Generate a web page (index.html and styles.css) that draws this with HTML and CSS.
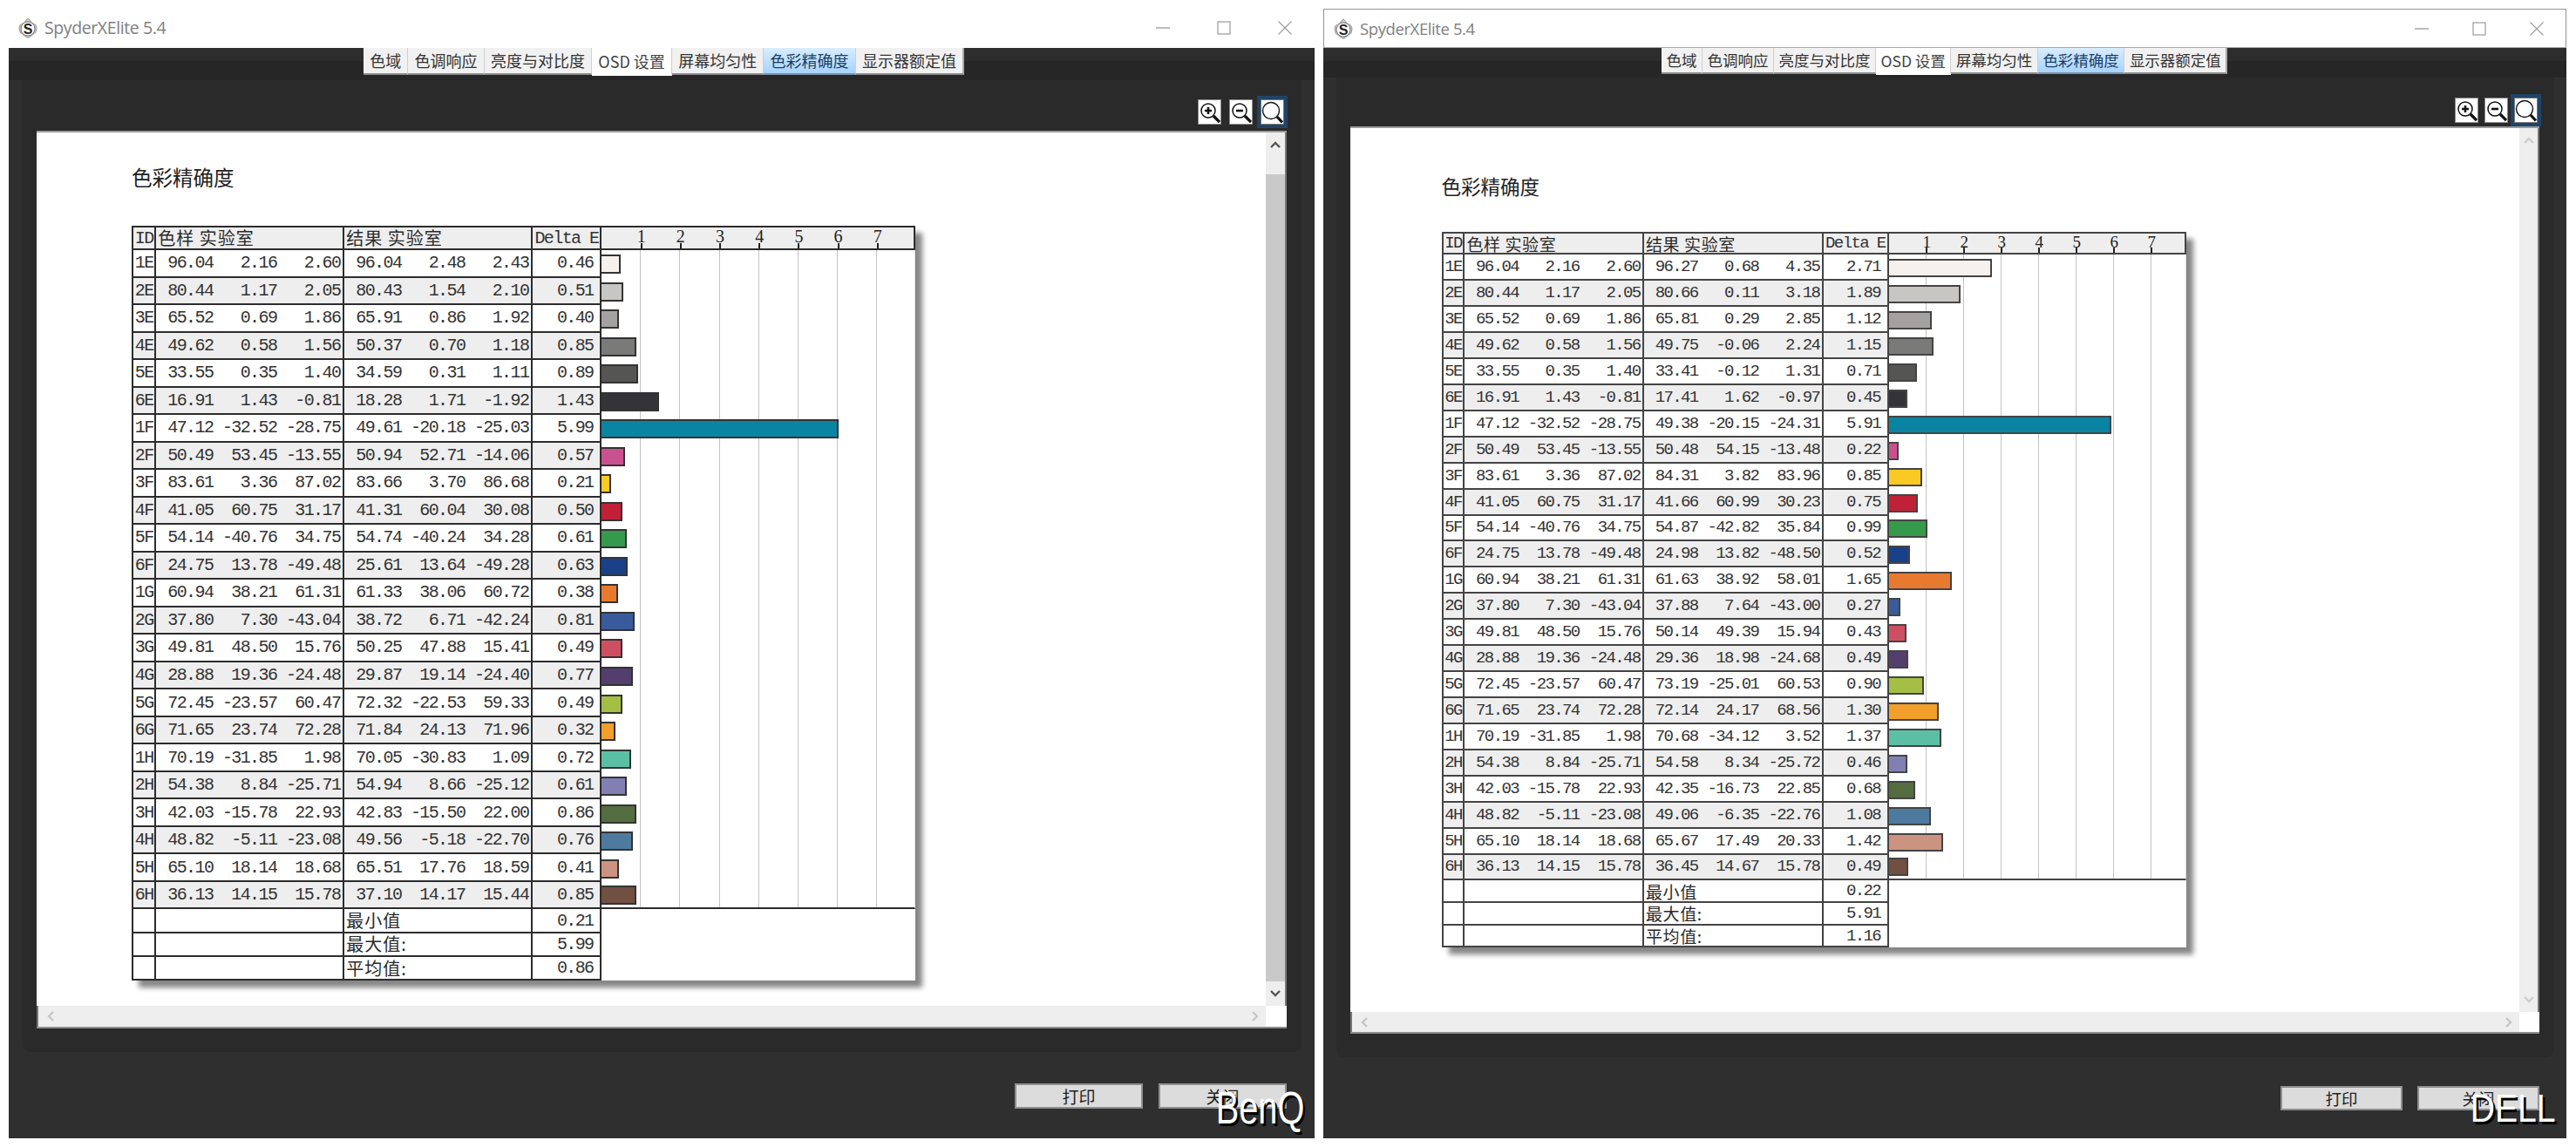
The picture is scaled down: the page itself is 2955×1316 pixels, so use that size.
FILE: index.html
```html
<!DOCTYPE html>
<html lang="zh-CN">
<head>
<meta charset="utf-8">
<title>SpyderXElite 5.4</title>
<link rel="stylesheet" href="styles.css">
</head>
<body>
<svg class="sprite" aria-hidden="true">
  <symbol id="logo" viewBox="0 0 22 24"><path d="M11 1 L14 4 L14.5 5.5 L20 8.5 L21 12 L20 17 L15 21 L11 23.500 L7 21 L2 17 L1 12 L2 8.500 L7.500 5.500 L8 4 Z" fill="#c9c9c9" stroke="#9a9a9a"/><circle cx="11" cy="13" r="8" fill="#fff" stroke="#777" stroke-width="1"/><text x="11" y="18.500" text-anchor="middle" class="logo-s">S</text></symbol>
  <symbol id="min" viewBox="0 0 16 16"><path d="M0 8H16" stroke="#9a9a9a" stroke-width="1.300" fill="none"/></symbol>
  <symbol id="max" viewBox="0 0 16 16"><rect x="1" y="1" width="14" height="14" stroke="#9a9a9a" stroke-width="1.200" fill="none"/></symbol>
  <symbol id="close" viewBox="0 0 16 16"><path d="M0.500 0.500L15.500 15.500M15.500 0.500L0.500 15.500" stroke="#9a9a9a" stroke-width="1.100" fill="none"/></symbol>
  <symbol id="zin" viewBox="0 0 25 27"><circle cx="11" cy="12" r="8" fill="none" stroke="#111" stroke-width="1.500"/><path d="M7 12H15M11 8V16" stroke="#111" stroke-width="2.600"/><path d="M17 18L24 25" stroke="#111" stroke-width="3.200"/></symbol>
  <symbol id="zout" viewBox="0 0 25 27"><circle cx="11" cy="12" r="8" fill="none" stroke="#111" stroke-width="1.500"/><path d="M7 12H15" stroke="#111" stroke-width="2.600"/><path d="M17 18L24 25" stroke="#111" stroke-width="3.200"/></symbol>
  <symbol id="zfit" viewBox="0 0 25 27"><circle cx="11" cy="12" r="9.500" fill="none" stroke="#111" stroke-width="1.400"/><path d="M18 19L24 25.500" stroke="#111" stroke-width="3.200"/></symbol>
  <symbol id="up" viewBox="0 0 12 8"><path d="M1 7L6 2L11 7" fill="none" stroke="currentColor" stroke-width="2.400"/></symbol>
  <symbol id="down" viewBox="0 0 12 8"><path d="M1 1L6 6L11 1" fill="none" stroke="currentColor" stroke-width="2.400"/></symbol>
  <symbol id="left" viewBox="0 0 8 12"><path d="M7 1L2 6L7 11" fill="none" stroke="currentColor" stroke-width="2.400"/></symbol>
  <symbol id="right" viewBox="0 0 8 12"><path d="M1 1L6 6L1 11" fill="none" stroke="currentColor" stroke-width="2.400"/></symbol>
</svg>
<div class="screen">

<section class="win win-a">
  <header class="titlebar">
    <svg class="logo"><use href="#logo"/></svg>
    <span class="apptitle">SpyderXElite 5.4</span>
    <div class="controls">
      <svg class="ctl"><use href="#min"/></svg>
      <svg class="ctl"><use href="#max"/></svg>
      <svg class="ctl"><use href="#close"/></svg>
    </div>
  </header>
  <div class="winbody">
    <nav class="tabstrip">
      <span class="tab">色域</span><span class="tab">色调响应</span><span class="tab">亮度与对比度</span><span class="tab tab-open">OSD 设置</span><span class="tab">屏幕均匀性</span><span class="tab tab-on">色彩精确度</span><span class="tab tab-end">显示器额定值</span>
    </nav>
    <div class="panel">
      <div class="zoombar">
        <span class="zbtn"><svg><use href="#zin"/></svg></span>
        <span class="zbtn"><svg><use href="#zout"/></svg></span>
        <span class="zbtn zbtn-on"><svg><use href="#zfit"/></svg></span>
      </div>
      <div class="viewport">
        <div class="page">
          <h1 class="report">色彩精确度</h1>
          <div class="table">
            <div class="row head"><span class="c id">ID</span><span class="c lab">色样 实验室</span><span class="c lab">结果 实验室</span><span class="c dh">Delta E</span><span class="axis"><span>1</span><span>2</span><span>3</span><span>4</span><span>5</span><span>6</span><span>7</span></span></div>
            <div class="row"><span class="c id">1E</span><span class="c v"><b>96.04</b><b>2.16</b><b>2.60</b></span><span class="c v"><b>96.04</b><b>2.48</b><b>2.43</b></span><span class="c de">0.46</span><span class="plot"><i class="bar p01" style="--d:.46"></i></span></div>
            <div class="row"><span class="c id">2E</span><span class="c v"><b>80.44</b><b>1.17</b><b>2.05</b></span><span class="c v"><b>80.43</b><b>1.54</b><b>2.10</b></span><span class="c de">0.51</span><span class="plot"><i class="bar p02" style="--d:.51"></i></span></div>
            <div class="row"><span class="c id">3E</span><span class="c v"><b>65.52</b><b>0.69</b><b>1.86</b></span><span class="c v"><b>65.91</b><b>0.86</b><b>1.92</b></span><span class="c de">0.40</span><span class="plot"><i class="bar p03" style="--d:.40"></i></span></div>
            <div class="row"><span class="c id">4E</span><span class="c v"><b>49.62</b><b>0.58</b><b>1.56</b></span><span class="c v"><b>50.37</b><b>0.70</b><b>1.18</b></span><span class="c de">0.85</span><span class="plot"><i class="bar p04" style="--d:.85"></i></span></div>
            <div class="row"><span class="c id">5E</span><span class="c v"><b>33.55</b><b>0.35</b><b>1.40</b></span><span class="c v"><b>34.59</b><b>0.31</b><b>1.11</b></span><span class="c de">0.89</span><span class="plot"><i class="bar p05" style="--d:.89"></i></span></div>
            <div class="row"><span class="c id">6E</span><span class="c v"><b>16.91</b><b>1.43</b><b>-0.81</b></span><span class="c v"><b>18.28</b><b>1.71</b><b>-1.92</b></span><span class="c de">1.43</span><span class="plot"><i class="bar p06" style="--d:1.43"></i></span></div>
            <div class="row"><span class="c id">1F</span><span class="c v"><b>47.12</b><b>-32.52</b><b>-28.75</b></span><span class="c v"><b>49.61</b><b>-20.18</b><b>-25.03</b></span><span class="c de">5.99</span><span class="plot"><i class="bar p07" style="--d:5.99"></i></span></div>
            <div class="row"><span class="c id">2F</span><span class="c v"><b>50.49</b><b>53.45</b><b>-13.55</b></span><span class="c v"><b>50.94</b><b>52.71</b><b>-14.06</b></span><span class="c de">0.57</span><span class="plot"><i class="bar p08" style="--d:.57"></i></span></div>
            <div class="row"><span class="c id">3F</span><span class="c v"><b>83.61</b><b>3.36</b><b>87.02</b></span><span class="c v"><b>83.66</b><b>3.70</b><b>86.68</b></span><span class="c de">0.21</span><span class="plot"><i class="bar p09" style="--d:.21"></i></span></div>
            <div class="row"><span class="c id">4F</span><span class="c v"><b>41.05</b><b>60.75</b><b>31.17</b></span><span class="c v"><b>41.31</b><b>60.04</b><b>30.08</b></span><span class="c de">0.50</span><span class="plot"><i class="bar p10" style="--d:.50"></i></span></div>
            <div class="row"><span class="c id">5F</span><span class="c v"><b>54.14</b><b>-40.76</b><b>34.75</b></span><span class="c v"><b>54.74</b><b>-40.24</b><b>34.28</b></span><span class="c de">0.61</span><span class="plot"><i class="bar p11" style="--d:.61"></i></span></div>
            <div class="row"><span class="c id">6F</span><span class="c v"><b>24.75</b><b>13.78</b><b>-49.48</b></span><span class="c v"><b>25.61</b><b>13.64</b><b>-49.28</b></span><span class="c de">0.63</span><span class="plot"><i class="bar p12" style="--d:.63"></i></span></div>
            <div class="row"><span class="c id">1G</span><span class="c v"><b>60.94</b><b>38.21</b><b>61.31</b></span><span class="c v"><b>61.33</b><b>38.06</b><b>60.72</b></span><span class="c de">0.38</span><span class="plot"><i class="bar p13" style="--d:.38"></i></span></div>
            <div class="row"><span class="c id">2G</span><span class="c v"><b>37.80</b><b>7.30</b><b>-43.04</b></span><span class="c v"><b>38.72</b><b>6.71</b><b>-42.24</b></span><span class="c de">0.81</span><span class="plot"><i class="bar p14" style="--d:.81"></i></span></div>
            <div class="row"><span class="c id">3G</span><span class="c v"><b>49.81</b><b>48.50</b><b>15.76</b></span><span class="c v"><b>50.25</b><b>47.88</b><b>15.41</b></span><span class="c de">0.49</span><span class="plot"><i class="bar p15" style="--d:.49"></i></span></div>
            <div class="row"><span class="c id">4G</span><span class="c v"><b>28.88</b><b>19.36</b><b>-24.48</b></span><span class="c v"><b>29.87</b><b>19.14</b><b>-24.40</b></span><span class="c de">0.77</span><span class="plot"><i class="bar p16" style="--d:.77"></i></span></div>
            <div class="row"><span class="c id">5G</span><span class="c v"><b>72.45</b><b>-23.57</b><b>60.47</b></span><span class="c v"><b>72.32</b><b>-22.53</b><b>59.33</b></span><span class="c de">0.49</span><span class="plot"><i class="bar p17" style="--d:.49"></i></span></div>
            <div class="row"><span class="c id">6G</span><span class="c v"><b>71.65</b><b>23.74</b><b>72.28</b></span><span class="c v"><b>71.84</b><b>24.13</b><b>71.96</b></span><span class="c de">0.32</span><span class="plot"><i class="bar p18" style="--d:.32"></i></span></div>
            <div class="row"><span class="c id">1H</span><span class="c v"><b>70.19</b><b>-31.85</b><b>1.98</b></span><span class="c v"><b>70.05</b><b>-30.83</b><b>1.09</b></span><span class="c de">0.72</span><span class="plot"><i class="bar p19" style="--d:.72"></i></span></div>
            <div class="row"><span class="c id">2H</span><span class="c v"><b>54.38</b><b>8.84</b><b>-25.71</b></span><span class="c v"><b>54.94</b><b>8.66</b><b>-25.12</b></span><span class="c de">0.61</span><span class="plot"><i class="bar p20" style="--d:.61"></i></span></div>
            <div class="row"><span class="c id">3H</span><span class="c v"><b>42.03</b><b>-15.78</b><b>22.93</b></span><span class="c v"><b>42.83</b><b>-15.50</b><b>22.00</b></span><span class="c de">0.86</span><span class="plot"><i class="bar p21" style="--d:.86"></i></span></div>
            <div class="row"><span class="c id">4H</span><span class="c v"><b>48.82</b><b>-5.11</b><b>-23.08</b></span><span class="c v"><b>49.56</b><b>-5.18</b><b>-22.70</b></span><span class="c de">0.76</span><span class="plot"><i class="bar p22" style="--d:.76"></i></span></div>
            <div class="row"><span class="c id">5H</span><span class="c v"><b>65.10</b><b>18.14</b><b>18.68</b></span><span class="c v"><b>65.51</b><b>17.76</b><b>18.59</b></span><span class="c de">0.41</span><span class="plot"><i class="bar p23" style="--d:.41"></i></span></div>
            <div class="row last"><span class="c id">6H</span><span class="c v"><b>36.13</b><b>14.15</b><b>15.78</b></span><span class="c v"><b>37.10</b><b>14.17</b><b>15.44</b></span><span class="c de">0.85</span><span class="plot"><i class="bar p24" style="--d:.85"></i></span></div>
            <div class="row sum"><span class="c id"></span><span class="c lab"></span><span class="c lab">最小值</span><span class="c de">0.21</span></div>
            <div class="row sum"><span class="c id"></span><span class="c lab"></span><span class="c lab">最大值:</span><span class="c de">5.99</span></div>
            <div class="row sum"><span class="c id"></span><span class="c lab"></span><span class="c lab">平均值:</span><span class="c de">0.86</span></div>
          </div>
        </div>
        <div class="vbar vbar-live">
          <span class="sbtn sbtn-top"><svg class="chev-v"><use href="#up"/></svg></span>
          <span class="thumb"></span>
          <span class="sbtn sbtn-bot"><svg class="chev-v"><use href="#down"/></svg></span>
        </div>
        <div class="hbar"><svg class="chev-h"><use href="#left"/></svg><svg class="chev-h"><use href="#right"/></svg></div>
        <div class="corner"></div>
      </div>
    </div>
    <footer class="foot">
      <span class="btn">打印</span><span class="btn">关闭</span>
      <span class="brand">BenQ</span>
    </footer>
  </div>
</section>

<section class="win win-b">
  <header class="titlebar">
    <svg class="logo"><use href="#logo"/></svg>
    <span class="apptitle">SpyderXElite 5.4</span>
    <div class="controls">
      <svg class="ctl"><use href="#min"/></svg>
      <svg class="ctl"><use href="#max"/></svg>
      <svg class="ctl"><use href="#close"/></svg>
    </div>
  </header>
  <div class="winbody">
    <nav class="tabstrip">
      <span class="tab">色域</span><span class="tab">色调响应</span><span class="tab">亮度与对比度</span><span class="tab tab-open">OSD 设置</span><span class="tab">屏幕均匀性</span><span class="tab tab-on">色彩精确度</span><span class="tab tab-end">显示器额定值</span>
    </nav>
    <div class="panel">
      <div class="zoombar">
        <span class="zbtn"><svg><use href="#zin"/></svg></span>
        <span class="zbtn"><svg><use href="#zout"/></svg></span>
        <span class="zbtn zbtn-on"><svg><use href="#zfit"/></svg></span>
      </div>
      <div class="viewport">
        <div class="page">
          <h1 class="report">色彩精确度</h1>
          <div class="table">
            <div class="row head"><span class="c id">ID</span><span class="c lab">色样 实验室</span><span class="c lab">结果 实验室</span><span class="c dh">Delta E</span><span class="axis"><span>1</span><span>2</span><span>3</span><span>4</span><span>5</span><span>6</span><span>7</span></span></div>
            <div class="row"><span class="c id">1E</span><span class="c v"><b>96.04</b><b>2.16</b><b>2.60</b></span><span class="c v"><b>96.27</b><b>0.68</b><b>4.35</b></span><span class="c de">2.71</span><span class="plot"><i class="bar p01" style="--d:2.71"></i></span></div>
            <div class="row"><span class="c id">2E</span><span class="c v"><b>80.44</b><b>1.17</b><b>2.05</b></span><span class="c v"><b>80.66</b><b>0.11</b><b>3.18</b></span><span class="c de">1.89</span><span class="plot"><i class="bar p02" style="--d:1.89"></i></span></div>
            <div class="row"><span class="c id">3E</span><span class="c v"><b>65.52</b><b>0.69</b><b>1.86</b></span><span class="c v"><b>65.81</b><b>0.29</b><b>2.85</b></span><span class="c de">1.12</span><span class="plot"><i class="bar p03" style="--d:1.12"></i></span></div>
            <div class="row"><span class="c id">4E</span><span class="c v"><b>49.62</b><b>0.58</b><b>1.56</b></span><span class="c v"><b>49.75</b><b>-0.06</b><b>2.24</b></span><span class="c de">1.15</span><span class="plot"><i class="bar p04" style="--d:1.15"></i></span></div>
            <div class="row"><span class="c id">5E</span><span class="c v"><b>33.55</b><b>0.35</b><b>1.40</b></span><span class="c v"><b>33.41</b><b>-0.12</b><b>1.31</b></span><span class="c de">0.71</span><span class="plot"><i class="bar p05" style="--d:.71"></i></span></div>
            <div class="row"><span class="c id">6E</span><span class="c v"><b>16.91</b><b>1.43</b><b>-0.81</b></span><span class="c v"><b>17.41</b><b>1.62</b><b>-0.97</b></span><span class="c de">0.45</span><span class="plot"><i class="bar p06" style="--d:.45"></i></span></div>
            <div class="row"><span class="c id">1F</span><span class="c v"><b>47.12</b><b>-32.52</b><b>-28.75</b></span><span class="c v"><b>49.38</b><b>-20.15</b><b>-24.31</b></span><span class="c de">5.91</span><span class="plot"><i class="bar p07" style="--d:5.91"></i></span></div>
            <div class="row"><span class="c id">2F</span><span class="c v"><b>50.49</b><b>53.45</b><b>-13.55</b></span><span class="c v"><b>50.48</b><b>54.15</b><b>-13.48</b></span><span class="c de">0.22</span><span class="plot"><i class="bar p08" style="--d:.22"></i></span></div>
            <div class="row"><span class="c id">3F</span><span class="c v"><b>83.61</b><b>3.36</b><b>87.02</b></span><span class="c v"><b>84.31</b><b>3.82</b><b>83.96</b></span><span class="c de">0.85</span><span class="plot"><i class="bar p09" style="--d:.85"></i></span></div>
            <div class="row"><span class="c id">4F</span><span class="c v"><b>41.05</b><b>60.75</b><b>31.17</b></span><span class="c v"><b>41.66</b><b>60.99</b><b>30.23</b></span><span class="c de">0.75</span><span class="plot"><i class="bar p10" style="--d:.75"></i></span></div>
            <div class="row"><span class="c id">5F</span><span class="c v"><b>54.14</b><b>-40.76</b><b>34.75</b></span><span class="c v"><b>54.87</b><b>-42.82</b><b>35.84</b></span><span class="c de">0.99</span><span class="plot"><i class="bar p11" style="--d:.99"></i></span></div>
            <div class="row"><span class="c id">6F</span><span class="c v"><b>24.75</b><b>13.78</b><b>-49.48</b></span><span class="c v"><b>24.98</b><b>13.82</b><b>-48.50</b></span><span class="c de">0.52</span><span class="plot"><i class="bar p12" style="--d:.52"></i></span></div>
            <div class="row"><span class="c id">1G</span><span class="c v"><b>60.94</b><b>38.21</b><b>61.31</b></span><span class="c v"><b>61.63</b><b>38.92</b><b>58.01</b></span><span class="c de">1.65</span><span class="plot"><i class="bar p13" style="--d:1.65"></i></span></div>
            <div class="row"><span class="c id">2G</span><span class="c v"><b>37.80</b><b>7.30</b><b>-43.04</b></span><span class="c v"><b>37.88</b><b>7.64</b><b>-43.00</b></span><span class="c de">0.27</span><span class="plot"><i class="bar p14" style="--d:.27"></i></span></div>
            <div class="row"><span class="c id">3G</span><span class="c v"><b>49.81</b><b>48.50</b><b>15.76</b></span><span class="c v"><b>50.14</b><b>49.39</b><b>15.94</b></span><span class="c de">0.43</span><span class="plot"><i class="bar p15" style="--d:.43"></i></span></div>
            <div class="row"><span class="c id">4G</span><span class="c v"><b>28.88</b><b>19.36</b><b>-24.48</b></span><span class="c v"><b>29.36</b><b>18.98</b><b>-24.68</b></span><span class="c de">0.49</span><span class="plot"><i class="bar p16" style="--d:.49"></i></span></div>
            <div class="row"><span class="c id">5G</span><span class="c v"><b>72.45</b><b>-23.57</b><b>60.47</b></span><span class="c v"><b>73.19</b><b>-25.01</b><b>60.53</b></span><span class="c de">0.90</span><span class="plot"><i class="bar p17" style="--d:.90"></i></span></div>
            <div class="row"><span class="c id">6G</span><span class="c v"><b>71.65</b><b>23.74</b><b>72.28</b></span><span class="c v"><b>72.14</b><b>24.17</b><b>68.56</b></span><span class="c de">1.30</span><span class="plot"><i class="bar p18" style="--d:1.30"></i></span></div>
            <div class="row"><span class="c id">1H</span><span class="c v"><b>70.19</b><b>-31.85</b><b>1.98</b></span><span class="c v"><b>70.68</b><b>-34.12</b><b>3.52</b></span><span class="c de">1.37</span><span class="plot"><i class="bar p19" style="--d:1.37"></i></span></div>
            <div class="row"><span class="c id">2H</span><span class="c v"><b>54.38</b><b>8.84</b><b>-25.71</b></span><span class="c v"><b>54.58</b><b>8.34</b><b>-25.72</b></span><span class="c de">0.46</span><span class="plot"><i class="bar p20" style="--d:.46"></i></span></div>
            <div class="row"><span class="c id">3H</span><span class="c v"><b>42.03</b><b>-15.78</b><b>22.93</b></span><span class="c v"><b>42.35</b><b>-16.73</b><b>22.85</b></span><span class="c de">0.68</span><span class="plot"><i class="bar p21" style="--d:.68"></i></span></div>
            <div class="row"><span class="c id">4H</span><span class="c v"><b>48.82</b><b>-5.11</b><b>-23.08</b></span><span class="c v"><b>49.06</b><b>-6.35</b><b>-22.76</b></span><span class="c de">1.08</span><span class="plot"><i class="bar p22" style="--d:1.08"></i></span></div>
            <div class="row"><span class="c id">5H</span><span class="c v"><b>65.10</b><b>18.14</b><b>18.68</b></span><span class="c v"><b>65.67</b><b>17.49</b><b>20.33</b></span><span class="c de">1.42</span><span class="plot"><i class="bar p23" style="--d:1.42"></i></span></div>
            <div class="row last"><span class="c id">6H</span><span class="c v"><b>36.13</b><b>14.15</b><b>15.78</b></span><span class="c v"><b>36.45</b><b>14.67</b><b>15.78</b></span><span class="c de">0.49</span><span class="plot"><i class="bar p24" style="--d:.49"></i></span></div>
            <div class="row sum"><span class="c id"></span><span class="c lab"></span><span class="c lab">最小值</span><span class="c de">0.22</span></div>
            <div class="row sum"><span class="c id"></span><span class="c lab"></span><span class="c lab">最大值:</span><span class="c de">5.91</span></div>
            <div class="row sum"><span class="c id"></span><span class="c lab"></span><span class="c lab">平均值:</span><span class="c de">1.16</span></div>
          </div>
        </div>
        <div class="vbar">
          <span class="sbtn sbtn-top"><svg class="chev-v"><use href="#up"/></svg></span>
          <span class="sbtn sbtn-bot"><svg class="chev-v"><use href="#down"/></svg></span>
        </div>
        <div class="hbar"><svg class="chev-h"><use href="#left"/></svg><svg class="chev-h"><use href="#right"/></svg></div>
        <div class="corner"></div>
      </div>
    </div>
    <footer class="foot">
      <span class="btn">打印</span><span class="btn">关闭</span>
      <span class="brand">DELL</span>
    </footer>
  </div>
</section>

</div>
</body>
</html>
```

FILE: styles.css
```css
* { box-sizing: border-box; }
html, body { margin: 0; padding: 0; background: #fff; }
body { width: 2955px; height: 1316px; overflow: hidden; font-family: "Noto Sans CJK SC", "Noto Sans", sans-serif; }
.sprite { display: none; }
.logo-s { font: 900 16px "Liberation Sans", sans-serif; fill: #222; }

.screen { display: flex; height: 1316px; padding: 0 11px 10px 10px; gap: 10px; }

.win { position: relative; display: flex; flex-direction: column; flex: none; }
.win-a {
  width: 1498px;
  --title-h: 55px; --title-pt: 9px; --title-pl: 11px;
  --ctl-gap: 54px; --ctl-pr: 26px; --app-fs: 19.500px;
  --strip-h: 37px; --tab-ml: 407px; --tab-fs: 18px; --tab-px: 7.200px; --tab-h: 31px;
  --panel-ml: 16px; --panel-mr: 15px; --panel-h: 1115px;
  --vp-ml: 16px; --vp-mr: 17px; --zoom-h: 58px; --zoom-pt: 23px; --zoom-gap: 11px; --zoom-pr: 4px; --vp-mb: 27px;
  --sb: 24px;
  --page-pl: 109px; --title-pt2: 38px; --report-fs: 23.500px; --report-mb: 41px;
  --c-id: 28.300px; --c-lab: 216px; --c-de: 79.200px; --c-plot: 360px;
  --h-h: 28px; --row-h: 31.520px; --sum-h: 27.300px;
  --v1: 65px; --v2: 73px; --v3: 73px;
  --fs: 20px; --ls: -1.600px; --cj: 20px; --cjls: 1px; --tick: 45.200px; --barh: 22px; --line: #2c2c2c;
  --bar-line: #333; --sb-arrow: #555; --foot-pt: 36px; --foot-pr: 32px; --foot-gap: 18px;
  --btn-w: 147px; --btn-h: 29px; --btn-fs: 19px;
  --brand-fs: 51px; --brand-r: 12px; --brand-b: 9px; --brand-sx: .78;
}
.win-b {
  margin-top: 10px;
  width: 1426px;
  --title-h: 45px; --title-pt: 0px; --title-pl: 11px;
  --ctl-gap: 50px; --ctl-pr: 25px; --app-fs: 18.500px;
  --strip-h: 34px; --tab-ml: 388px; --tab-fs: 17.500px; --tab-px: 5.500px; --tab-h: 30px;
  --panel-ml: 15px; --panel-mr: 14px; --panel-h: 1124px;
  --vp-ml: 16px; --vp-mr: 17px; --zoom-h: 55.500px; --zoom-pt: 24px; --zoom-gap: 9px; --zoom-pr: 3px; --vp-mb: 27px;
  --sb: 23px;
  --page-pl: 104.500px; --title-pt2: 53.500px; --report-fs: 22.500px; --report-mb: 38px;
  --c-id: 26.900px; --c-lab: 205.600px; --c-de: 75.600px; --c-plot: 341px;
  --h-h: 26.300px; --row-h: 29.930px; --sum-h: 25.700px;
  --v1: 61.700px; --v2: 69.600px; --v3: 70px;
  --fs: 19px; --ls: -1.600px; --cj: 19px; --cjls: .6px; --tick: 43px; --barh: 21px; --line: #444;
  --bar-line: #444; --sb-arrow: #ccc; --foot-pt: 33px; --foot-pr: 31px; --foot-gap: 17px;
  --btn-w: 140px; --btn-h: 28px; --btn-fs: 18.500px;
  --brand-fs: 45px; --brand-r: 12px; --brand-b: 12px; --brand-sx: .87;
}

/* title bar */
.titlebar {
  flex: none; display: flex; align-items: center; height: var(--title-h);
  padding: var(--title-pt) var(--ctl-pr) 0 var(--title-pl); background: #fff;
}
.win-b .titlebar { border: 1px solid #97909a; border-bottom-color: #aaa; }
.logo { width: 22px; height: 24px; flex: none; }
.apptitle { margin-left: 8px; font-family: "Open Sans", sans-serif; font-size: var(--app-fs); line-height: 22px; color: #808080; white-space: nowrap; letter-spacing: -.4px; }
.controls { margin-left: auto; display: flex; gap: var(--ctl-gap); align-items: center; }
.ctl { width: 16px; height: 16px; display: block; }

/* body */
.winbody { position: relative; flex: 1; display: flex; flex-direction: column; background: #2f2f2f; }
.tabstrip {
  flex: none; display: flex; align-items: flex-start; height: var(--strip-h); padding-left: var(--tab-ml);
  background: linear-gradient(#2e2e2e 0, #2c2c2c 15px, #262626 15px, #262626 100%);
}
.tab {
  height: var(--tab-h); line-height: calc(var(--tab-h) - 3px); padding: 0 var(--tab-px);
  font-size: var(--tab-fs); color: #333; white-space: nowrap;
  background: #f1f1f1; border-right: 1px solid #cfcfcf; border-bottom: 2px solid #8a8a8a;
}
.tab-open { background: #fff; border-bottom: 2px solid #fff; height: calc(var(--tab-h) + 1px); line-height: var(--tab-h); color: #444; }
.tab-on { background: linear-gradient(#d9ecfd, #a6d3ff); color: #1a3f66; border-bottom-color: #7d8fa5; }
.tab-end { border-right: 2px solid #aaa; }

/* panel */
.panel {
  flex: none; height: var(--panel-h); margin: 0 var(--panel-mr) 0 var(--panel-ml);
  padding: 0 var(--vp-mr) var(--vp-mb) var(--vp-ml);
  display: flex; flex-direction: column; background: #2a2a2a; border-radius: 0 0 9px 9px;
}
.zoombar {
  flex: none; height: var(--zoom-h); padding: var(--zoom-pt) var(--zoom-pr) 0 0;
  display: flex; justify-content: flex-end; align-items: flex-start; gap: var(--zoom-gap);
}
.zbtn { width: 25px; height: 27px; background: #fff; box-shadow: 0 0 0 1px #8a8a8a; display: block; }
.zbtn svg { width: 25px; height: 27px; display: block; }
.zbtn-on { box-shadow: 0 0 0 1px #777, 0 0 0 5px #1f4466; }

.viewport {
  flex: 1; min-height: 0; display: grid; background: #fff;
  grid-template-columns: minmax(0, 1fr) var(--sb); grid-template-rows: minmax(0, 1fr) var(--sb);
  border-top: 2px solid #9c9c9c; border-bottom: 2px solid #8c8c8c;
}
.page { padding: calc(var(--title-pt2) - 2px) 0 0 var(--page-pl); overflow: hidden; }
.report { margin: 0 0 var(--report-mb); font-size: var(--report-fs); line-height: 30px; height: 30px; font-weight: 400; color: #222; }

/* table */
.table { width: max-content; box-shadow: 8px 8px 6px rgba(0, 0, 0, .48); background: #fff; font-family: "Liberation Mono", "Noto Sans CJK SC", monospace; }
.row {
  display: grid; height: var(--row-h); color: #333; font-size: var(--fs); letter-spacing: var(--ls);
  grid-template-columns: var(--c-id) var(--c-lab) var(--c-lab) var(--c-de) var(--c-plot);
}
.row:nth-child(odd) .c { background: #eee; }
.row.head { height: var(--h-h); }
.row.head .c, .row.head .axis { background: #eee; border-top: 2px solid var(--line); }
.row.sum { height: var(--sum-h); }
.row.sum .c { background: #fff; }
.c { display: flex; align-items: center; border-right: 2px solid var(--line); border-bottom: 2px solid var(--line); min-width: 0; }
.id { justify-content: center; border-left: 2px solid var(--line); }
.lab { padding-left: 2px; font-family: "Noto Sans CJK SC", sans-serif; font-size: var(--cj); letter-spacing: var(--cjls); line-height: 1; color: #2a2a2a; white-space: pre; }
.dh { justify-content: center; white-space: pre; }
.de { justify-content: flex-end; padding-right: 8px; }
.v { display: grid; grid-template-columns: var(--v1) var(--v2) var(--v3); align-items: center; }
.v b { font-weight: 400; text-align: right; }

.axis {
  display: flex; padding-left: calc(var(--tick) / 2); border-right: 2px solid var(--line); border-bottom: 2px solid var(--line);
  font-family: "Liberation Serif", serif; font-size: var(--fs); letter-spacing: 0; color: #222;
}
.axis span { position: relative; flex: none; width: var(--tick); text-align: center; line-height: 20px; }
.axis span::after { content: ""; position: absolute; left: 50%; bottom: 0; width: 2px; height: 6px; margin-left: -1px; background: #222; }
.plot {
  display: flex; align-items: center; padding-top: 1px;
  background: repeating-linear-gradient(90deg, #fff 0, #fff calc(var(--tick) - 1px), #c4c4c4 calc(var(--tick) - 1px), #c4c4c4 var(--tick));
  border-right: 1px solid #ddd;
}
.row.last .plot { border-bottom: 2px solid var(--line); }
.bar {
  display: block; height: var(--barh); width: calc(var(--d) * var(--tick) + 1px);
  border: 2px solid var(--bar-line); border-left: 0;
}
.p01 { background: #f6f1ec; } .p02 { background: #c8c6c3; } .p03 { background: #a3a2a0; } .p04 { background: #7a7a78; }
.p05 { background: #555554; } .p06 { background: #343436; } .p07 { background: #0a84a3; } .p08 { background: #c9518f; }
.p09 { background: #fbc923; } .p10 { background: #c12138; } .p11 { background: #359a4c; } .p12 { background: #194089; }
.p13 { background: #e87a2f; } .p14 { background: #3a5b9b; } .p15 { background: #cf4f62; } .p16 { background: #533e6e; }
.p17 { background: #a5bf45; } .p18 { background: #f29f2c; } .p19 { background: #5bbfa6; } .p20 { background: #8280b3; }
.p21 { background: #536c40; } .p22 { background: #4f7a9f; } .p23 { background: #cb9380; } .p24 { background: #714f41; }

/* scrollbars */
.vbar { display: flex; flex-direction: column; justify-content: space-between; background: #eee; border-right: 2px solid #777; color: var(--sb-arrow); }
.sbtn { flex: none; height: 28px; display: flex; align-items: center; justify-content: center; }
.vbar-live .sbtn-top { height: 48px; align-items: flex-start; padding-top: 10px; }
.chev-v { width: 12px; height: 8px; display: block; }
.thumb { flex: 1; background: #c9c9c9; }
.hbar { display: flex; justify-content: space-between; align-items: center; padding: 0 8px 0 10px; background: #eee; border-left: 2px solid #777; color: #c6c6c6; }
.chev-h { width: 8px; height: 12px; display: block; }
.corner { background: #fff; }

/* footer */
.foot { position: relative; flex: 1; display: flex; justify-content: flex-end; align-items: flex-start; gap: var(--foot-gap); padding: var(--foot-pt) var(--foot-pr) 0 0; }
.btn {
  width: var(--btn-w); height: var(--btn-h); display: flex; align-items: center; justify-content: center;
  font-size: var(--btn-fs); color: #222; background: #dcdcdc; border: 2px solid #8f8f8f;
}
.brand {
  position: absolute; right: var(--brand-r); bottom: var(--brand-b); line-height: 1;
  font-family: "Liberation Sans", sans-serif; font-size: var(--brand-fs);
  color: #fff; text-shadow: 3px 3px 0 #000;
  transform: scaleX(var(--brand-sx)); transform-origin: right center;
}
```
